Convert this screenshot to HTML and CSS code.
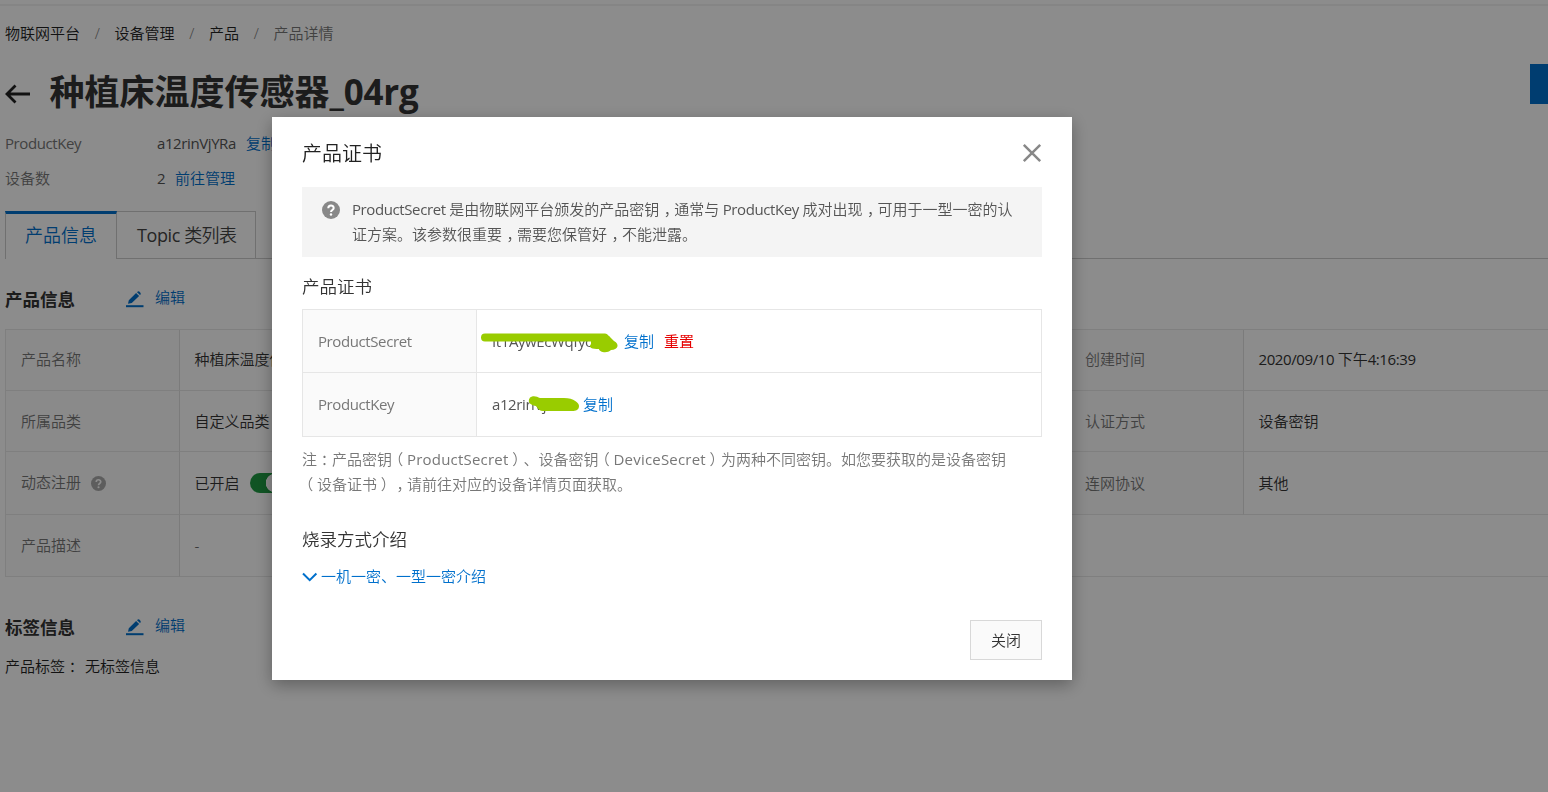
FILE: index.html
```html
<!DOCTYPE html>
<html lang="zh-CN">
<head>
<meta charset="utf-8">
<title>产品详情</title>
<link rel="stylesheet" href="styles.css">
</head>
<body>
<main class="page">
  <nav class="breadcrumb">
    <span>物联网平台</span><i>/</i><span>设备管理</span><i>/</i><span>产品</span><i>/</i><span class="muted">产品详情</span>
  </nav>
  <header class="title-row">
    <svg class="back" width="26" height="22" viewBox="0 0 26 22"><path d="M10.500 2.500 2 11l8.500 8.500M2.500 11H25" fill="none" stroke="currentColor" stroke-width="2.800"/></svg>
    <h1>种植床温度传感器<span class="title-latin">_04rg</span></h1>
    <button class="primary" aria-label="发布"></button>
  </header>
  <dl class="meta">
    <dt><span class="latin">ProductKey</span></dt><dd><span class="latin meta-key">a12rinVjYRa</span><a>复制</a></dd>
    <dt>设备数</dt><dd><span class="count">2</span><a>前往管理</a></dd>
  </dl>
  <div class="tabs">
    <div class="tab active">产品信息</div>
    <div class="tab topic"><span class="latin">Topic </span>类列表</div>
    <div class="tab-rest"></div>
  </div>
  <div class="section-head first">
    <h2>产品信息</h2>
    <svg class="pen" width="18" height="17" viewBox="0 0 18 17"><path d="M0 15.200h17.500" stroke="currentColor" stroke-width="2"/><path d="M2 12.800l.8-3.600 7.300-7.200 3 2.900-7.300 7.200zM11 1.200a2 2 0 0 1 3 0 2 2 0 0 1 0 2.900z" fill="currentColor"/></svg>
    <a>编辑</a>
  </div>
  <div class="info">
    <div class="key">产品名称</div><div class="val">种植床温度传感器_04rg</div><div class="key">创建时间</div><div class="val"><p><span class="latin">2020/09/10 </span>下午<span class="latin">4:16:39</span></p></div>
    <div class="key low">所属品类</div><div class="val low">自定义品类</div><div class="key low">认证方式</div><div class="val low">设备密钥</div>
    <div class="key">动态注册
      <svg class="help" width="15" height="15" viewBox="0 0 18 18"><circle cx="9" cy="9" r="9" fill="currentColor"/><path d="M6.300 7.200C6.300 3.700 11.700 3.700 11.700 7c0 2-2.700 2-2.700 4" fill="none" stroke="#fff" stroke-width="2"/><circle cx="9" cy="13.500" r="1.300" fill="#fff"/></svg>
    </div><div class="val low">已开启<span class="switch"></span></div><div class="key low">连网协议</div><div class="val low">其他</div>
    <div class="key">产品描述</div><div class="val wide">-</div>
  </div>
  <div class="section-head second">
    <h2>标签信息</h2>
    <svg class="pen" width="18" height="17" viewBox="0 0 18 17"><path d="M0 15.200h17.500" stroke="currentColor" stroke-width="2"/><path d="M2 12.800l.8-3.600 7.300-7.200 3 2.900-7.300 7.200zM11 1.200a2 2 0 0 1 3 0 2 2 0 0 1 0 2.900z" fill="currentColor"/></svg>
    <a>编辑</a>
  </div>
  <p class="labels"><span>产品标签<span class="punct">：</span></span><span>无标签信息</span></p>
</main>

<div class="mask">
  <section class="dialog">
    <header class="dialog-head">
      <h3>产品证书</h3>
      <svg width="20" height="20" viewBox="0 0 20 20"><path d="M1.800 1.800l16.400 16.400M18.200 1.800L1.800 18.200" stroke="#888" stroke-width="2.500"/></svg>
    </header>
    <div class="notice">
      <svg width="18" height="18" viewBox="0 0 18 18"><circle cx="9" cy="9" r="9" fill="#888"/><path d="M6.300 7.200C6.300 3.700 11.700 3.700 11.700 7c0 2-2.700 2-2.700 4" fill="none" stroke="#fff" stroke-width="2"/><circle cx="9" cy="13.500" r="1.200" fill="#fff"/></svg>
      <p><span class="latin">ProductSecret </span>是由物联网平台颁发的产品密钥<span class="punct comma">，</span>通常与<span class="latin"> ProductKey </span>成对出现<span class="punct comma">，</span>可用于一型一密的认<br>证方案。该参数很重要<span class="punct comma">，</span>需要您保管好<span class="punct comma">，</span>不能泄露。</p>
    </div>
    <h4>产品证书</h4>
    <div class="cert">
      <div class="cert-key"><span class="latin">ProductSecret</span></div>
      <div class="cert-val"><span class="secret latin">It1AywEcWqfyc</span><a>复制</a><a class="danger">重置</a>
        <svg class="scribble" width="140" height="22" viewBox="0 0 140 22"><path d="M5 5.500H125L129 11" fill="none" stroke="#9c0" stroke-width="8" stroke-linecap="round" stroke-linejoin="round"/><path d="M111 4h18l5 5c6 3 4 9-3 9-4 4-12 2-12-1-7 0-11-1-8-5z" fill="#9c0"/></svg>
      </div>
      <div class="cert-key"><span class="latin">ProductKey</span></div>
      <div class="cert-val"><span class="pkey latin">a12rinVjYRa</span><a>复制</a>
        <svg class="scribble key-scribble" width="52" height="18" viewBox="0 0 52 18"><path d="M2 1.500C6-1 9 1 12 2h24c10 0 15 5 15 8 0 4-3 5-7 5H15c-3 0-5-2-7-5C2 9-1 6 2 1.500z" fill="#9c0"/></svg>
      </div>
    </div>
    <p class="note">注<span class="punct">：</span>产品密钥<span class="punct">（</span><span class="note-latin">ProductSecret</span><span class="punct">）</span>、设备密钥<span class="punct">（</span><span class="note-latin">DeviceSecret</span><span class="punct">）</span>为两种不同密钥。如您要获取的是设备密钥<br><span class="punct">（</span>设备证书<span class="punct">）</span><span class="punct comma">，</span>请前往对应的设备详情页面获取。</p>
    <h4 class="burn">烧录方式介绍</h4>
    <a class="expand"><svg width="16" height="10" viewBox="0 0 16 10"><path d="M1 1.500l6.700 6.700 6.700-6.700" fill="none" stroke="currentColor" stroke-width="2"/></svg>一机一密、一型一密介绍</a>
    <footer><button class="close">关闭</button></footer>
  </section>
</div>
</body>
</html>
```
FILE: styles.css
```css
* { box-sizing: border-box; }
body {
  margin: 0;
  height: 792px;
  overflow: hidden;
  background: #fff;
  color: #333;
  font: 350 15px/25px "Open Sans", "Noto Sans CJK SC", sans-serif;
  text-spacing-trim: space-all;
  white-space: nowrap;
}
h1, h2, h3, h4, p, dl, dd { margin: 0; }
a { color: #0070cc; }
.page { height: 792px; padding-left: 5px; border-top: 4px solid #fff; box-shadow: inset 0 2px #f3f3f3; }
.latin { font-weight: 400; letter-spacing: -0.4px; }
.breadcrumb { display: flex; padding-top: 17px; height: 42px; color: #222; }
.breadcrumb i { width: 34.5px; text-align: center; font-style: normal; color: #777; }
.muted { color: #777; }
.title-row { display: flex; align-items: center; height: 80px; padding-top: 11px; color: #333; }
.back { color: #222; margin-top: 5px; }
h1 { margin-left: 18.5px; font-size: 35px; line-height: 48px; font-weight: 700; }
.title-latin { letter-spacing: -0.2px; }
.primary { width: 18px; height: 40px; margin: -15px 0 0 auto; padding: 0; border: 0; background: #0070cc; }
.meta { display: grid; grid-template-columns: 152px 1fr; grid-auto-rows: 35px; line-height: 35px; color: #555; }
.meta dt { color: #777; }
.meta dd { display: flex; gap: 10px; }
.meta-key { width: 79px; }
.count { width: 8px; font-weight: 400; }
.tabs { display: flex; height: 48px; margin-top: 15px; font-size: 18px; line-height: 47px; color: #444; }
.tab { border-top: 1px solid #ccc; border-right: 1px solid #ccc; }
.active { width: 112px; padding-left: 19px; border-left: 1px solid #ccc; border-top: 3px solid #0070cc; line-height: 43px; color: #0070cc; }
.topic { width: 139px; padding-left: 20px; border-bottom: 1px solid #ccc; letter-spacing: -0.6px; }
.tab-rest { flex: 1; border-bottom: 1px solid #ccc; }
.section-head { display: flex; align-items: center; height: 30px; }
.first { margin-top: 25px; }
h2 { width: 121px; font-size: 17.5px; line-height: 30px; font-weight: 700; }
.pen { color: #0070cc; }
.section-head a { margin: -4px 0 0 11px; }
.info { display: grid; grid-template-columns: 174px 890px 174px 1fr; grid-template-rows: 61px 61px 63px 62px; margin-top: 15px; border: 1px solid #e8e8e8; border-right: 0; border-bottom: 0; }
.info > div { display: flex; align-items: center; padding-left: 15px; padding-bottom: 1px; border-bottom: 1px solid #e8e8e8; }
.info > .low { padding-bottom: 0; }
.key { color: #777; background: #fbfbfb; border-right: 1px solid #e0e0e0; }
.info > .val { padding-left: 14.5px; color: #333; }
.wide { grid-column: span 3; }
.help { margin: 2px 0 0 10px; color: #aaa; }
.switch { width: 40px; height: 20px; margin-left: 10px; border-radius: 10px; background: radial-gradient(circle at 25px 10px, #fff 9px, #1e9a42 9.500px); }
.second { margin-top: 35px; }
.labels { display: flex; gap: 5px; margin-top: 12px; color: #222; }
.punct { padding: 0 3.75px; font-feature-settings: "halt"; }
.comma { padding: 0 3px 0 4.5px; }
.note-latin { font-weight: 400; letter-spacing: 0.2px; }
.mask { position: fixed; inset: 0; background: rgba(0, 0, 0, .45); }
.dialog { width: 800px; height: 563px; margin: 117px 0 0 272px; padding: 20px 30px; background: #fff; box-shadow: 0 5px 16px rgba(0, 0, 0, .32); display: flex; flex-direction: column; }
.dialog-head { display: flex; justify-content: space-between; align-items: center; height: 50px; padding-bottom: 17px; }
.dialog-head svg { margin-top: -2px; }
h3 { font-size: 20px; line-height: 34px; font-weight: 350; color: #222; }
.notice { display: flex; gap: 12px; height: 70px; padding: 10px 20px; background: #f4f4f4; color: #555; }
.notice svg { margin-top: 4px; }
h4 { height: 52px; font-size: 17.5px; line-height: 58px; font-weight: 350; }
.cert { display: grid; grid-template-columns: 174px 1fr; grid-template-rows: 63px 64px; height: 128px; border: 1px solid #e6e6e6; border-bottom: 0; }
.cert > div { display: flex; align-items: center; padding-left: 15px; border-bottom: 1px solid #e6e6e6; }
.cert-key { color: #777; background: #fafafa; border-right: 1px solid #e6e6e6; }
.cert-val { position: relative; color: #555; }
.secret { width: 132px; }
.pkey { width: 91px; }
.cert .danger { margin-left: 10px; color: #e60000; font-weight: 400; }
.scribble { position: absolute; left: 3px; top: 22px; }
.key-scribble { left: 51px; top: 23px; }
.note { margin-top: 10px; color: #777; }
.burn { height: 42px; margin-top: 25px; line-height: 34px; }
.expand { display: flex; align-items: center; gap: 3px; height: 25px; }
footer { display: flex; justify-content: flex-end; margin-top: auto; }
.close { width: 72px; height: 40px; padding: 0; border: 1px solid #d8d8d8; background: #fafafa; color: #333; font: inherit; }
```
